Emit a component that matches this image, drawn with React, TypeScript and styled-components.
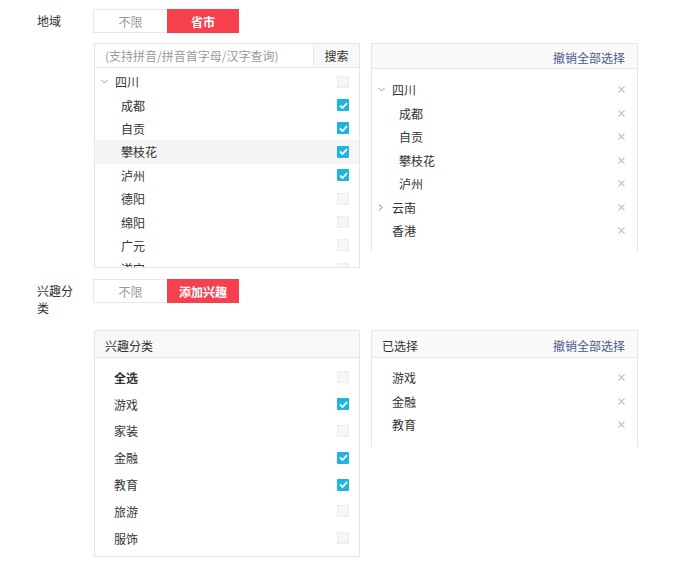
import React from 'react';
import styled, { createGlobalStyle } from 'styled-components';

const GlobalStyle = createGlobalStyle`
  body {
    margin: 0;
    background: #fff;
    font-family: "Noto Sans CJK SC", "Noto Sans", sans-serif;
    font-size: 12px;
    color: #333;
  }
`;

const Page = styled.div`
  padding: 9px 0 0 37px;
`;

const Section = styled.div<{ $top?: number }>`
  display: flex;
  margin-top: ${(p) => p.$top || 0}px;
`;

const Label = styled.div<{ $width: number }>`
  width: ${(p) => p.$width}px;
  margin-right: ${(p) => 56 - p.$width}px;
  padding-top: 3px;
  line-height: 17px;
  word-break: break-all;
`;

const Field = styled.div`
  display: flex;
  flex-direction: column;
`;

const Toggle = styled.div`
  display: flex;
  height: 24px;
`;

const ToggleButton = styled.div<{ $active?: boolean; $width: number }>`
  box-sizing: border-box;
  width: ${(p) => p.$width}px;
  height: 24px;
  display: flex;
  align-items: center;
  justify-content: center;
  background: ${(p) => (p.$active ? '#f7404e' : '#fff')};
  color: ${(p) => (p.$active ? '#fff' : '#999')};
  font-weight: ${(p) => (p.$active ? 700 : 400)};
  border: ${(p) => (p.$active ? 'none' : '1px solid #e8e8e8')};
  border-right: none;
`;

const Panels = styled.div<{ $top: number }>`
  display: flex;
  gap: 11px;
  margin-top: ${(p) => p.$top}px;
  margin-left: 1px;
`;

const Panel = styled.div<{ $width: number; $height: number; $open?: boolean }>`
  box-sizing: border-box;
  width: ${(p) => p.$width}px;
  height: ${(p) => p.$height}px;
  border: 1px solid #e6e6e6;
  border-bottom: ${(p) => (p.$open ? 'none' : '1px solid #e6e6e6')};
  display: flex;
  flex-direction: column;
  overflow: hidden;
`;

const SearchBar = styled.div`
  display: flex;
  height: 23px;
  border-bottom: 1px solid #e6e6e6;
  flex-shrink: 0;
`;

const SearchInput = styled.div`
  flex: 1;
  display: flex;
  align-items: center;
  padding-left: 10px;
  color: #999;
`;

const SearchButton = styled.div`
  width: 45px;
  display: flex;
  align-items: center;
  justify-content: center;
  border-left: 1px solid #e6e6e6;
  background: #f8f8f8;
  color: #333;
`;

const Header = styled.div<{ $height: number; $bg: string }>`
  display: flex;
  align-items: center;
  justify-content: space-between;
  box-sizing: border-box;
  height: ${(p) => p.$height}px;
  flex-shrink: 0;
  padding: 2px 12px 0 10px;
  background: ${(p) => p.$bg};
  border-bottom: 1px solid #e6e6e6;
`;

const HeaderLink = styled.span`
  margin-left: auto;
  color: #485891;
`;

const List = styled.div<{ $top: number }>`
  padding-top: ${(p) => p.$top}px;
  overflow: hidden;
`;

const Row = styled.div<{ $height: number; $indent: number; $hover?: boolean; $bold?: boolean }>`
  display: flex;
  align-items: center;
  height: ${(p) => p.$height}px;
  padding-left: ${(p) => p.$indent}px;
  padding-right: 10px;
  background: ${(p) => (p.$hover ? '#f5f5f5' : 'transparent')};
  font-weight: ${(p) => (p.$bold ? 700 : 400)};
`;

const Arrow = styled.span`
  width: 14px;
  display: flex;
  align-items: center;
  flex-shrink: 0;
`;

const Name = styled.span`
  flex: 1;
`;

const Box = styled.span<{ $checked?: boolean }>`
  box-sizing: border-box;
  width: 12px;
  height: 12px;
  border-radius: 1px;
  display: flex;
  align-items: center;
  justify-content: center;
  background: ${(p) => (p.$checked ? '#1db6e1' : '#f6f6f6')};
  border: ${(p) => (p.$checked ? 'none' : '1px solid #ececec')};
`;

const Remove = styled.span`
  display: flex;
  margin-right: 2px;
`;

const ChevronDown = () => (
  <svg width="7" height="5" viewBox="0 0 7 5">
    <path d="M0.5 1 L3.5 4 L6.5 1" fill="none" stroke="#999" strokeWidth="1" />
  </svg>
);

const ChevronRight = () => (
  <svg width="5" height="7" viewBox="0 0 5 7">
    <path d="M1 0.5 L4 3.5 L1 6.5" fill="none" stroke="#777" strokeWidth="1" />
  </svg>
);

const Check = ({ checked }: { checked?: boolean }) => (
  <Box $checked={checked}>
    {checked && (
      <svg width="9" height="7" viewBox="0 0 9 7">
        <path d="M1 3.5 L3.5 6 L8 1.2" fill="none" stroke="#fff" strokeWidth="1.8" />
      </svg>
    )}
  </Box>
);

const Cross = () => (
  <Remove>
    <svg width="7" height="7" viewBox="0 0 7 7">
      <path d="M0.5 0.5 L6.5 6.5 M6.5 0.5 L0.5 6.5" stroke="#c4c4c4" strokeWidth="1.1" />
    </svg>
  </Remove>
);

type TreeItem = { name: string; level: number; checked?: boolean; hover?: boolean };

const regionTree: TreeItem[] = [
  { name: '四川', level: 0 },
  { name: '成都', level: 1, checked: true },
  { name: '自贡', level: 1, checked: true },
  { name: '攀枝花', level: 1, checked: true, hover: true },
  { name: '泸州', level: 1, checked: true },
  { name: '德阳', level: 1 },
  { name: '绵阳', level: 1 },
  { name: '广元', level: 1 },
  { name: '遂宁', level: 1 },
];

type Picked = { name: string; level: number; arrow?: 'down' | 'right' };

const pickedRegions: Picked[] = [
  { name: '四川', level: 0, arrow: 'down' },
  { name: '成都', level: 1 },
  { name: '自贡', level: 1 },
  { name: '攀枝花', level: 1 },
  { name: '泸州', level: 1 },
  { name: '云南', level: 0, arrow: 'right' },
  { name: '香港', level: 0 },
];

const interests = [
  { name: '全选', bold: true },
  { name: '游戏', checked: true },
  { name: '家装' },
  { name: '金融', checked: true },
  { name: '教育', checked: true },
  { name: '旅游' },
  { name: '服饰' },
];

const pickedInterests = ['游戏', '金融', '教育'];

const App = () => {
  return (
    <Page>
      <GlobalStyle />
      <Section>
        <Label $width={40}>地域</Label>
        <Field>
          <Toggle>
            <ToggleButton $width={74}>不限</ToggleButton>
            <ToggleButton $width={72} $active>
              省市
            </ToggleButton>
          </Toggle>
          <Panels $top={10}>
            <Panel $width={266} $height={225}>
              <SearchBar>
                <SearchInput>(支持拼音/拼音首字母/汉字查询)</SearchInput>
                <SearchButton>搜索</SearchButton>
              </SearchBar>
              <List $top={2}>
                {regionTree.map((item) => (
                  <Row
                    key={item.name}
                    $height={23.4}
                    $indent={item.level === 0 ? 6 : 26}
                    $hover={item.hover}
                  >
                    {item.level === 0 && (
                      <Arrow>
                        <ChevronDown />
                      </Arrow>
                    )}
                    <Name>{item.name}</Name>
                    <Check checked={item.checked} />
                  </Row>
                ))}
              </List>
            </Panel>
            <Panel $width={267} $height={209} $open>
              <Header $height={25} $bg="#fafafa">
                <HeaderLink>撤销全部选择</HeaderLink>
              </Header>
              <List $top={9}>
                {pickedRegions.map((item) => (
                  <Row key={item.name} $height={23.5} $indent={item.level === 0 ? 6 : 27}>
                    {item.level === 0 && (
                      <Arrow>
                        {item.arrow === 'down' && <ChevronDown />}
                        {item.arrow === 'right' && <ChevronRight />}
                      </Arrow>
                    )}
                    <Name>{item.name}</Name>
                    <Cross />
                  </Row>
                ))}
              </List>
            </Panel>
          </Panels>
        </Field>
      </Section>

      <Section $top={11}>
        <Label $width={40}>兴趣分类</Label>
        <Field>
          <Toggle>
            <ToggleButton $width={74}>不限</ToggleButton>
            <ToggleButton $width={72} $active>
              添加兴趣
            </ToggleButton>
          </Toggle>
          <Panels $top={27}>
            <Panel $width={266} $height={227}>
              <Header $height={27} $bg="#f8f8f8">
                兴趣分类
              </Header>
              <List $top={6}>
                {interests.map((item) => (
                  <Row key={item.name} $height={26.8} $indent={19} $bold={item.bold}>
                    <Name>{item.name}</Name>
                    <Check checked={item.checked} />
                  </Row>
                ))}
              </List>
            </Panel>
            <Panel $width={267} $height={117} $open>
              <Header $height={27} $bg="#fafafa">
                已选择
                <HeaderLink>撤销全部选择</HeaderLink>
              </Header>
              <List $top={8}>
                {pickedInterests.map((name) => (
                  <Row key={name} $height={23.5} $indent={20}>
                    <Name>{name}</Name>
                    <Cross />
                  </Row>
                ))}
              </List>
            </Panel>
          </Panels>
        </Field>
      </Section>
    </Page>
  );
};

export default App;
